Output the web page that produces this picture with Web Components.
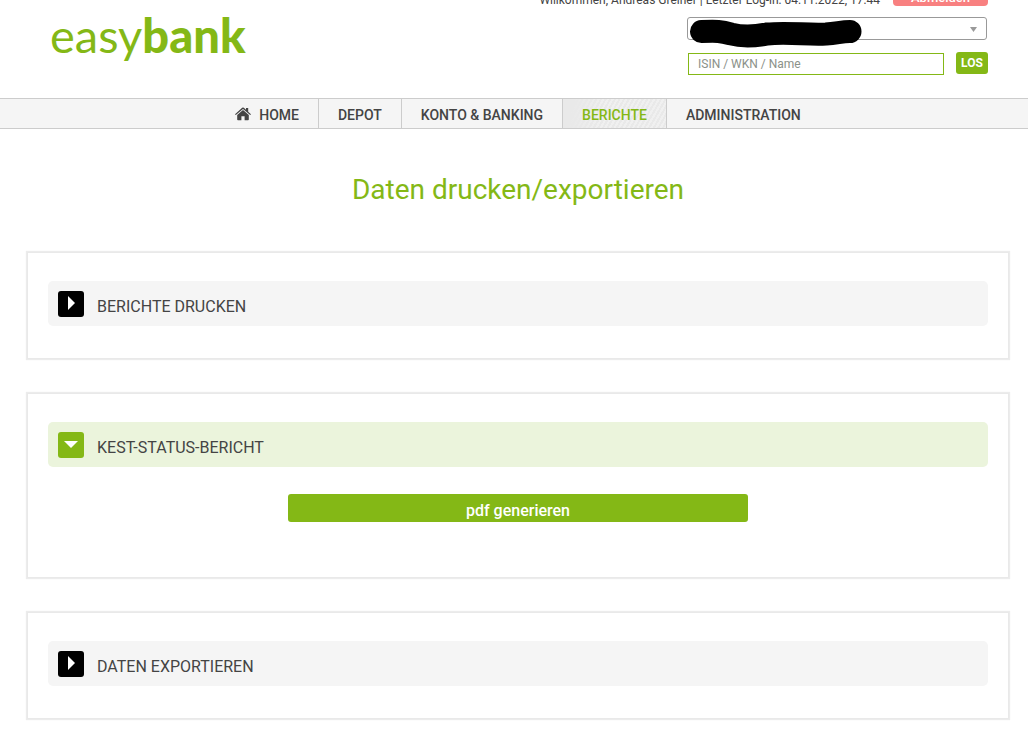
<!DOCTYPE html>
<html lang="de">
<head>
<meta charset="utf-8">
<title>easybank – Daten drucken/exportieren</title>
<style>
body { margin: 0; background: #fff; color: #444; font-family: Roboto, "Liberation Sans", sans-serif; }
main { padding: 0 20px 28px 28px; }
h1 { margin: 41px 0 43px; font-size: 28px; line-height: 40px; font-weight: 400; color: #84b816; text-align: center; }
.stack { display: flex; flex-direction: column; gap: 36px; }
</style>
</head>
<body>
<bank-header></bank-header>
<bank-nav>
  <bank-nav-item icon>HOME</bank-nav-item>
  <bank-nav-item>DEPOT</bank-nav-item>
  <bank-nav-item>KONTO &amp; BANKING</bank-nav-item>
  <bank-nav-item active>BERICHTE</bank-nav-item>
  <bank-nav-item>ADMINISTRATION</bank-nav-item>
</bank-nav>
<main>
  <h1>Daten drucken/exportieren</h1>
  <div class="stack">
    <report-panel label="BERICHTE DRUCKEN"></report-panel>
    <report-panel label="KEST-STATUS-BERICHT" open><bank-button>pdf generieren</bank-button></report-panel>
    <report-panel label="DATEN EXPORTIEREN"></report-panel>
  </div>
</main>
<script>
class BaseElement extends HTMLElement {
  connectedCallback() {
    if (!this.shadowRoot) this.attachShadow({ mode: 'open' }).innerHTML = this.render();
  }
}

customElements.define('bank-logo', class extends BaseElement {
  render() {
    return `<style>
      :host { display: block; }
      a { display: block; color: #84b816; text-decoration: none; font: 400 47px/54px Lato, sans-serif; white-space: nowrap; }
      b { font-weight: 900; }
    </style><a href="#" aria-label="easybank">easy<b>bank</b></a>`;
  }
});

customElements.define('account-select', class extends BaseElement {
  render() {
    return `<style>
      :host { display: block; position: relative; margin-right: 1px; }
      select { display: block; box-sizing: border-box; width: 100%; height: 23px; border: 1px solid #999; border-radius: 3px; background: #fff; appearance: none; }
      .arrow { position: absolute; right: 10px; top: 10px; width: 7px; height: 5px; }
      .redaction { position: absolute; left: 2px; top: 2px; width: 174px; height: 30px; }
      svg { pointer-events: none; }
    </style>
    <select aria-label="Depot"><option></option></select>
    <svg class="arrow" viewBox="0 0 7 5"><path d="M0 0h7L3.5 5z" fill="#999"/></svg>
    <svg class="redaction" viewBox="0 0 174 30"><path d="M12.5 12.5C28 12 32 12 42 15C53 18 63 18 78 15C98 13 119 16 137 15C149 14 153 12.5 161 12.5" fill="none" stroke="#000" stroke-width="23" stroke-linecap="round"/></svg>`;
  }
});

customElements.define('bank-header', class extends BaseElement {
  render() {
    return `<style>
      :host { display: block; height: 98px; overflow: hidden; }
      .row { display: flex; justify-content: space-between; align-items: flex-start; padding: 0 40px 0 50px; }
      bank-logo { padding-top: 8px; }
      .tools { width: 301px; }
      .status { display: flex; justify-content: flex-end; align-items: flex-end; gap: 13px; height: 6px; margin-bottom: 11px; white-space: nowrap; font-size: 12px; line-height: 12px; }
      .status button { flex: none; width: 95px; height: 24px; border: 0; border-radius: 4px; padding: 8px 0 0; background: #f88080; color: #fff; font: 500 13px/16px Roboto, sans-serif; }
      form { display: flex; gap: 12px; margin: 12px 0 0 1px; }
      input { flex: 1; min-width: 0; box-sizing: border-box; height: 22px; margin-top: 1px; border: 1px solid #84b816; padding: 0 9px; font: 12px/20px Roboto, sans-serif; }
      input::placeholder { color: #8b9189; }
      form button { width: 32px; height: 22px; border: 0; border-radius: 3px; padding: 0; background: #84b816; color: #fff; font: 700 12px/22px Roboto, sans-serif; }
    </style>
    <div class="row">
      <bank-logo></bank-logo>
      <div class="tools">
        <div class="status"><span>Willkommen, Andreas Greiner | Letzter Log-in: 04.11.2022, 17:44</span><button type="button">Abmelden</button></div>
        <account-select></account-select>
        <form><input type="text" aria-label="Suche" placeholder="ISIN / WKN / Name"><button type="button">LOS</button></form>
      </div>
    </div>`;
  }
});

customElements.define('bank-nav', class extends BaseElement {
  render() {
    return `<style>
      :host { display: block; border: solid #ccc; border-width: 1px 0; background: #f5f5f5; padding-left: 8px; }
      nav { display: flex; justify-content: center; height: 29px; }
    </style><nav><slot></slot></nav>`;
  }
});

customElements.define('bank-nav-item', class extends BaseElement {
  render() {
    const house = this.hasAttribute('icon')
      ? `<svg viewBox="0 0 16 14" aria-hidden="true"><path d="M0 7.2L7.2.8q.8-.6 1.6 0L11 2.7V1h2.2v3.7L16 7.2l-.8.9L8 1.9.8 8.1z" fill="#444"/><path d="M2.2 8L8 3l5.8 5v4.5q0 .8-.8.8H9.6V9.2H6.4v4.1H3q-.8 0-.8-.8z" fill="#444"/></svg>` : '';
    return `<style>
      :host { display: block; border-right: 1px solid #ccc; }
      :host(:last-child) { border-right: 0; }
      a { display: flex; align-items: center; height: 100%; box-sizing: border-box; padding: 3px 19px 0; color: #444; font-size: 14px; line-height: 20px; font-weight: 500; text-decoration: none; white-space: nowrap; }
      :host([active]) a { color: #84b816; background: linear-gradient(100deg, #e9e9e9 10%, transparent 40%), repeating-linear-gradient(120deg, #e9e9e9 0 2px, #f0f0f0 2px 4px); }
      svg { width: 16px; height: 14px; margin: 0 8px 3px 0; }
    </style><a href="#">${house}<slot></slot></a>`;
  }
});

customElements.define('bank-button', class extends BaseElement {
  render() {
    return `<style>
      :host { display: block; width: 49%; margin: 27px auto 23px; }
      button { display: block; width: 100%; height: 28px; border: 0; border-radius: 3px; padding: 5px 0 0; background: #84b816; color: #fff; font: 500 16px/23px Roboto, sans-serif; }
    </style><button type="button"><slot></slot></button>`;
  }
});

customElements.define('report-panel', class extends BaseElement {
  render() {
    const open = this.hasAttribute('open');
    return `<style>
      :host { display: block; padding: 28px 20px 32px; background: #fff; box-shadow: 0 0 0 1px #e9e9e9, 0 0 1px 2px #ececec; }
      button { display: flex; align-items: center; gap: 13px; width: 100%; height: 45px; border: 0; border-radius: 5px; padding: 0 10px; background: #f5f5f5; color: #444; font: 400 16px/20px Roboto, sans-serif; text-align: left; }
      :host([open]) button { background: #ebf4dc; }
      svg { flex: none; width: 26px; height: 26px; border-radius: 3px; background: #000; }
      :host([open]) svg { background: #84b816; }
      span { padding-top: 6px; }
    </style>
    <button type="button" aria-expanded="${open}"><svg viewBox="0 0 26 26" aria-hidden="true"><path d="${open ? 'M6 9h14l-7 7z' : 'M10 5v14l7-7z'}" fill="#fff"/></svg><span>${this.getAttribute('label')}</span></button>
    <slot></slot>`;
  }
});
</script>
</body>
</html>
